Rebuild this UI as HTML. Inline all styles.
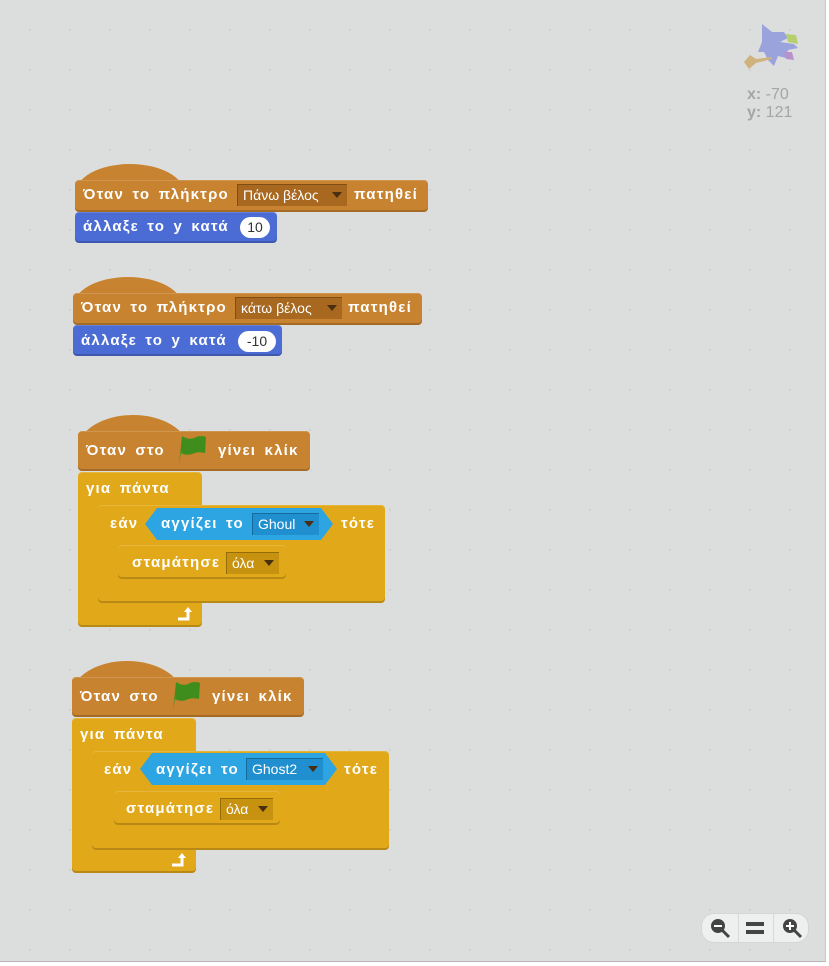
<!DOCTYPE html><html><head><meta charset="utf-8"><style>
body{margin:0;width:829px;height:966px;background:#fff;overflow:hidden;font-family:"Liberation Sans",sans-serif}
#c{position:absolute;left:0;top:0;width:825px;height:961px;background:#dcdedd;border-right:1px solid #c8c8c8;border-bottom:1px solid #b8b8b8;
background-image:radial-gradient(circle,#d1d3d2 1px,transparent 1.5px);background-size:40px 40px;background-position:10px 10px}
.b{position:absolute;border-radius:4px;box-shadow:inset 0 -2px 0 rgba(0,0,0,.18),inset 0 1px 0 rgba(255,255,255,.15)}
.o{background:#c88330}.bl{background:#4b6cd4}.y{background:#e1a91a}
.t{position:absolute;color:#fff;font-weight:bold;font-size:15px;letter-spacing:1.2px;word-spacing:3px;white-space:nowrap;line-height:16px}
.dd{position:absolute;font-size:14px;color:#fff;line-height:22px;height:22px;padding-left:6px;white-space:nowrap;box-sizing:border-box;box-shadow:inset 1px 1px 0 rgba(0,0,0,.25)}
.dd:after{content:"";position:absolute;right:5px;top:8px;border:5px solid transparent;border-top:6px solid #4a2e10;border-bottom:0}
.hat{position:absolute;background:#c88330;border-radius:50% 50% 0 0/100% 100% 0 0}
.num{position:absolute;background:#fff;border-radius:11px;color:#333;font-size:14px;text-align:center;line-height:21px}
.hex{position:absolute;background:#2ca5e2;clip-path:polygon(0 50%,12px 0,calc(100% - 12px) 0,100% 50%,calc(100% - 12px) 100%,12px 100%)}
</style></head><body><div id="c">

<!-- sprite -->
<svg style="position:absolute;left:742px;top:22px" width="66" height="50" viewBox="0 0 66 50">
<path d="M20 2 L30 10 L42 10 L46 16 L38 20 L52 22 L56 26 L46 28 L44 36 L36 34 L32 44 L26 38 L22 30 L16 30 L20 20 Z" fill="#9aa3dc"/>
<path d="M44 12 L54 13 L56 22 L46 20Z" fill="#b5cf6e"/>
<path d="M42 30 L50 30 L52 38 L44 37Z" fill="#b792cc"/>
<path d="M2 40 L8 33 L14 37 L30 35 L30 37 L14 41 L7 47 Z" fill="#d0b27e"/>
</svg>
<div style="position:absolute;left:747px;top:86px;color:#a4a6a6;font-size:16px;line-height:18px"><b>x:</b> -70<br><b>y:</b> 121</div>

<!-- script 1 -->
<div class="hat" style="left:75px;top:164px;width:110px;height:30px"></div>
<div class="b o" style="left:75px;top:180px;width:353px;height:32px"></div>
<div class="t" style="left:83px;top:187px">Όταν το πλήκτρο</div>
<div class="dd" style="left:237px;top:184px;width:110px;background:#a8681f">Πάνω βέλος</div>
<div class="t" style="left:354px;top:187px">πατηθεί</div>
<div class="b bl" style="left:75px;top:212px;width:202px;height:31px"></div>
<div class="t" style="left:83px;top:219px">άλλαξε το y κατά</div>
<div class="num" style="left:240px;top:217px;width:30px">10</div>

<!-- script 2 -->
<div class="hat" style="left:73px;top:277px;width:110px;height:30px"></div>
<div class="b o" style="left:73px;top:293px;width:349px;height:32px"></div>
<div class="t" style="left:81px;top:300px">Όταν το πλήκτρο</div>
<div class="dd" style="left:235px;top:297px;width:107px;background:#a8681f">κάτω βέλος</div>
<div class="t" style="left:348px;top:300px">πατηθεί</div>
<div class="b bl" style="left:73px;top:325px;width:209px;height:31px"></div>
<div class="t" style="left:81px;top:333px">άλλαξε το y κατά</div>
<div class="num" style="left:238px;top:331px;width:38px">-10</div>

<!-- script 3 -->
<div class="hat" style="left:78px;top:415px;width:110px;height:34px"></div>
<div class="b o" style="left:78px;top:431px;width:232px;height:40px"></div>
<div class="t" style="left:86px;top:443px">Όταν στο</div>
<svg style="position:absolute;left:176px;top:433px" width="32" height="34"><path d="M3 32 L6 3 Q14 8 20 4 Q26 2 30 4 L29 20 Q22 18 16 21 Q10 23 5 20 L3 32Z" fill="#3f8e1d"/></svg>
<div class="t" style="left:218px;top:443px">γίνει κλίκ</div>
<div class="b y" style="left:78px;top:472px;width:124px;height:155px"></div>
<div class="t" style="left:86px;top:481px">για πάντα</div>
<div class="b y" style="left:98px;top:505px;width:287px;height:98px"></div>
<div class="t" style="left:110px;top:516px">εάν</div>
<div class="hex" style="left:145px;top:508px;width:188px;height:32px"></div>
<div class="t" style="left:161px;top:516px">αγγίζει το</div>
<div class="dd" style="left:252px;top:513px;width:67px;background:#1f8fcf">Ghoul</div>
<div class="t" style="left:341px;top:516px">τότε</div>
<div class="b y" style="left:118px;top:545px;width:168px;height:34px"></div>
<div class="t" style="left:132px;top:555px">σταμάτησε</div>
<div class="dd" style="left:226px;top:552px;width:53px;background:#c6920f">όλα</div>
<svg style="position:absolute;left:176px;top:606px" width="20" height="16"><path d="M2 13 H12 V5" stroke="#fff" stroke-width="3" fill="none"/><path d="M8 6 L12 1 L16 6Z" fill="#fff"/></svg>

<!-- script 4 -->
<div class="hat" style="left:72px;top:661px;width:110px;height:34px"></div>
<div class="b o" style="left:72px;top:677px;width:232px;height:40px"></div>
<div class="t" style="left:80px;top:689px">Όταν στο</div>
<svg style="position:absolute;left:170px;top:679px" width="32" height="34"><path d="M3 32 L6 3 Q14 8 20 4 Q26 2 30 4 L29 20 Q22 18 16 21 Q10 23 5 20 L3 32Z" fill="#3f8e1d"/></svg>
<div class="t" style="left:212px;top:689px">γίνει κλίκ</div>
<div class="b y" style="left:72px;top:718px;width:124px;height:155px"></div>
<div class="t" style="left:80px;top:727px">για πάντα</div>
<div class="b y" style="left:92px;top:751px;width:297px;height:99px"></div>
<div class="t" style="left:104px;top:762px">εάν</div>
<div class="hex" style="left:140px;top:753px;width:197px;height:32px"></div>
<div class="t" style="left:156px;top:762px">αγγίζει το</div>
<div class="dd" style="left:246px;top:758px;width:77px;background:#1f8fcf">Ghost2</div>
<div class="t" style="left:344px;top:762px">τότε</div>
<div class="b y" style="left:114px;top:791px;width:166px;height:34px"></div>
<div class="t" style="left:126px;top:801px">σταμάτησε</div>
<div class="dd" style="left:220px;top:798px;width:53px;background:#c6920f">όλα</div>
<svg style="position:absolute;left:170px;top:852px" width="20" height="16"><path d="M2 13 H12 V5" stroke="#fff" stroke-width="3" fill="none"/><path d="M8 6 L12 1 L16 6Z" fill="#fff"/></svg>

<!-- zoom -->
<div style="position:absolute;left:702px;top:914px;width:106px;height:28px;background:#eef0ef;border-radius:12px;box-shadow:0 0 0 1px #d4d6d5"></div>
<div style="position:absolute;left:738px;top:914px;width:1px;height:28px;background:#d8d8d8"></div>
<div style="position:absolute;left:773px;top:914px;width:1px;height:28px;background:#d8d8d8"></div>
<svg style="position:absolute;left:708px;top:917px" width="24" height="22"><circle cx="10" cy="9" r="7" fill="#444"/><path d="M14 13 L21 20" stroke="#444" stroke-width="3"/><rect x="6" y="8" width="8" height="2" fill="#fff"/></svg>
<div style="position:absolute;left:746px;top:922px;width:18px;height:4px;background:#444"></div>
<div style="position:absolute;left:746px;top:930px;width:18px;height:4px;background:#444"></div>
<svg style="position:absolute;left:780px;top:917px" width="24" height="22"><circle cx="10" cy="9" r="7" fill="#444"/><path d="M14 13 L21 20" stroke="#444" stroke-width="3"/><rect x="6" y="8" width="8" height="2" fill="#fff"/><rect x="9" y="5" width="2" height="8" fill="#fff"/></svg>
</div></body></html>
